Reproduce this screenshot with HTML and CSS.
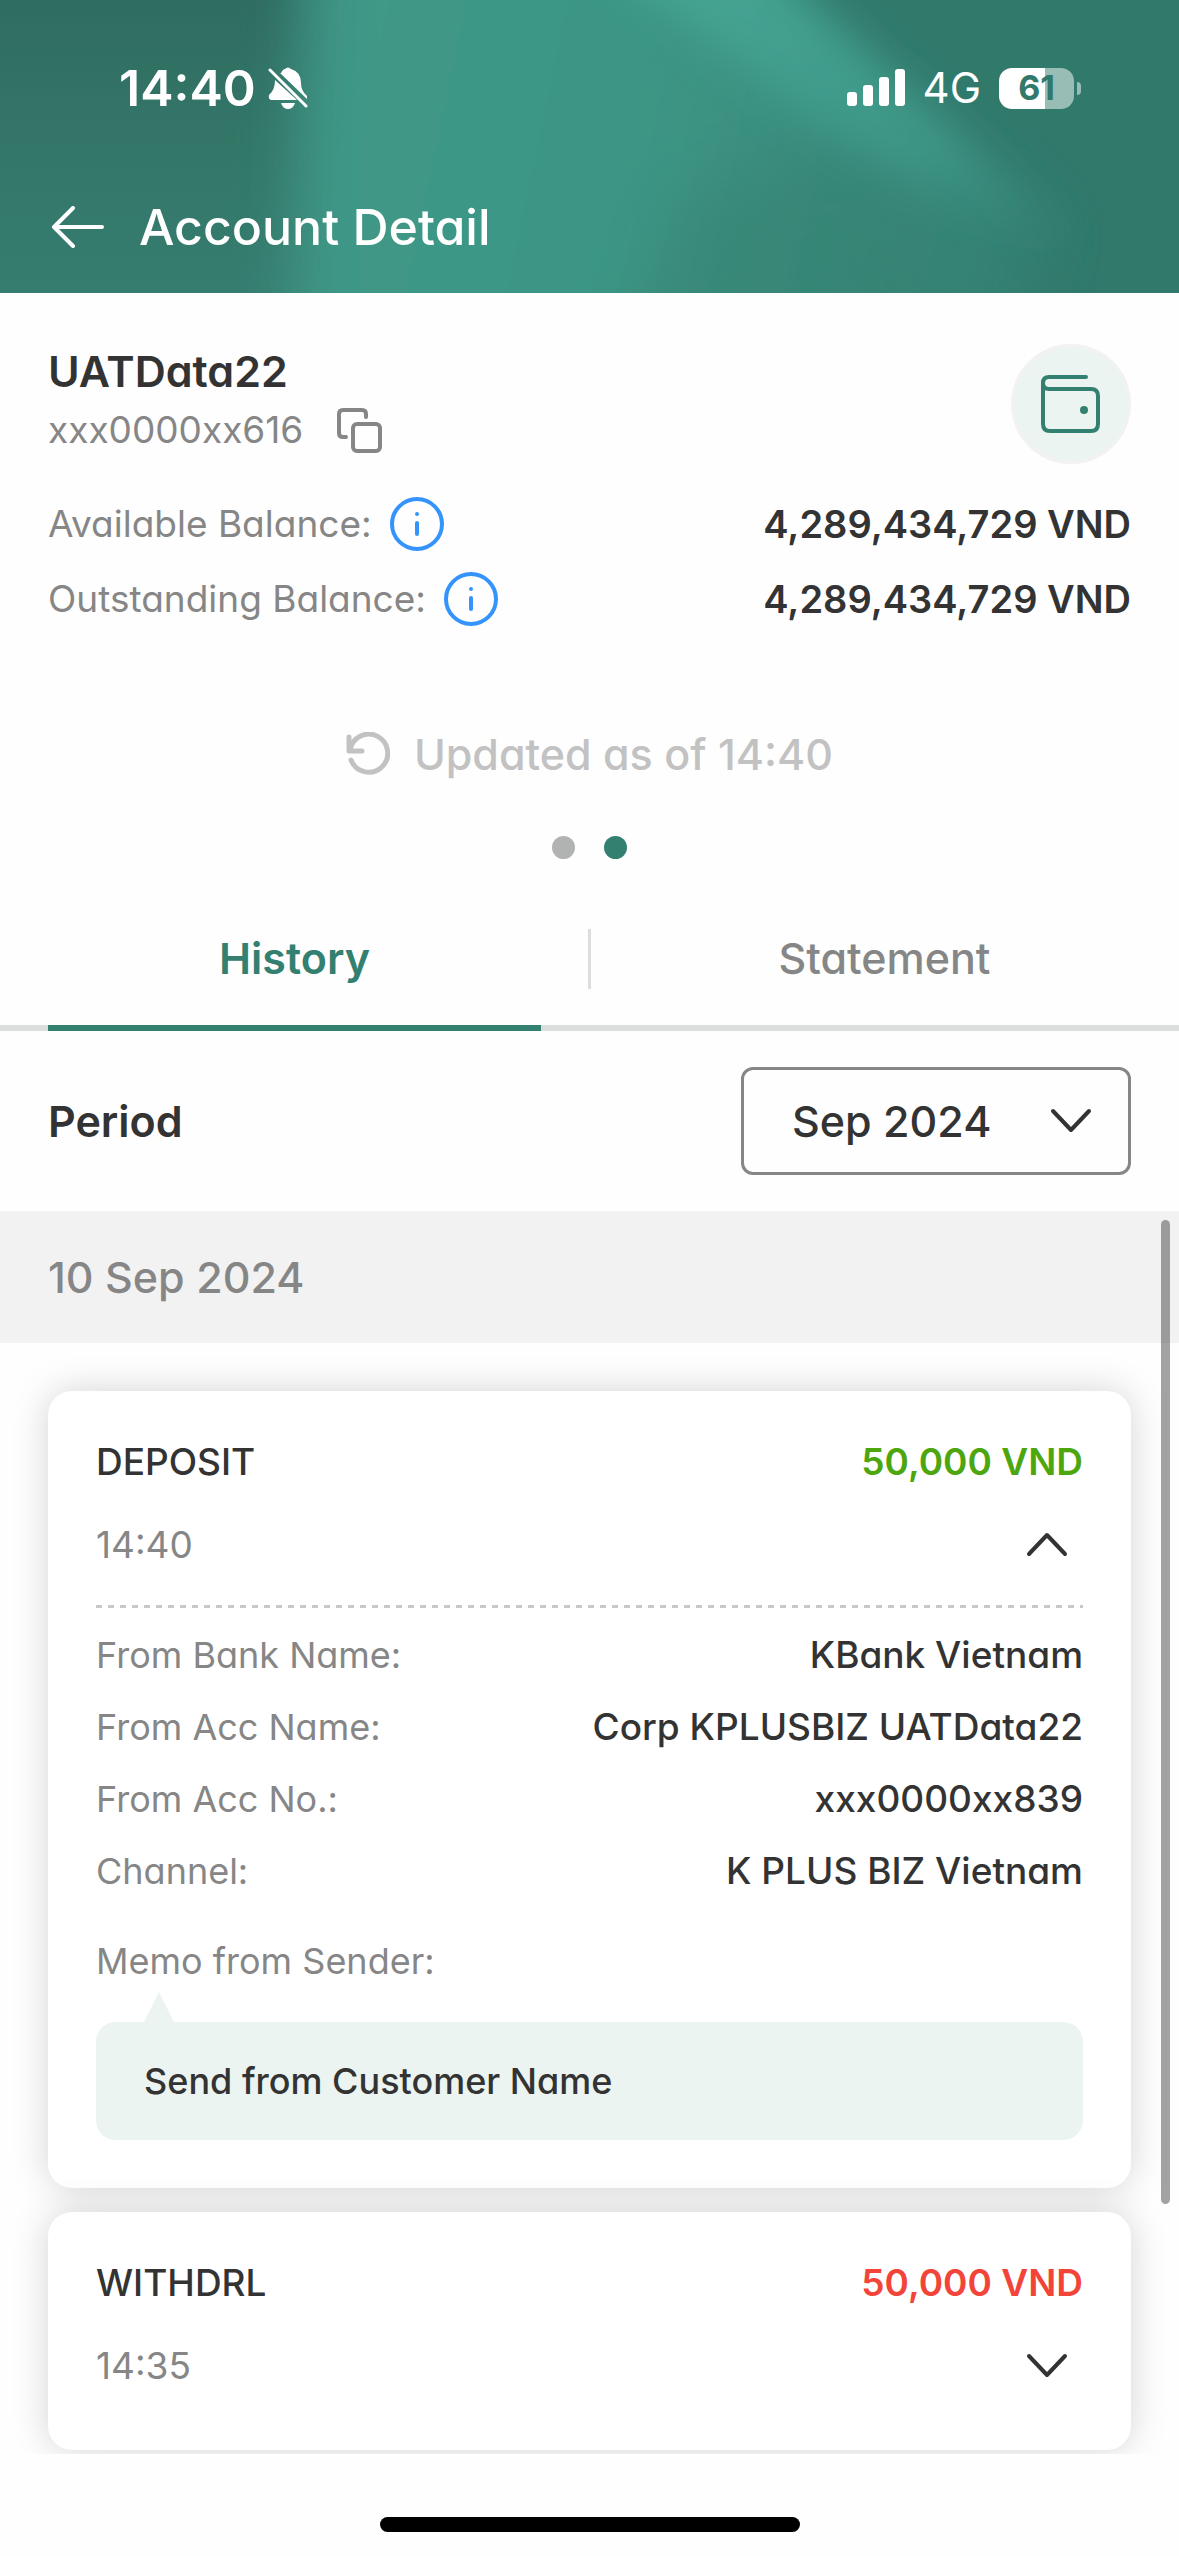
FILE: index.html
```html
<!DOCTYPE html>
<html lang="en">
<head>
<meta charset="utf-8">
<meta name="viewport" content="width=device-width, initial-scale=1">
<title>Account Detail</title>
<link rel="stylesheet" href="styles.css">
</head>
<body>
<div class="screen">
  <header class="header">
    <svg class="header-art" viewBox="0 0 1179 293" preserveAspectRatio="none" aria-hidden="true">
      <defs>
        <linearGradient id="left" x1="0" y1="0" x2="0" y2="1"><stop offset="0" stop-color="#2c675c"/><stop offset=".45" stop-color="#337668"/><stop offset="1" stop-color="#388274"/></linearGradient>
        <linearGradient id="mid" gradientUnits="userSpaceOnUse" x1="300" y1="0" x2="1060" y2="160"><stop offset="0" stop-color="#3f9887"/><stop offset=".45" stop-color="#3e9685"/><stop offset="1" stop-color="#348072"/></linearGradient>
        <linearGradient id="beam" gradientUnits="userSpaceOnUse" x1="700" y1="0" x2="1040" y2="240"><stop offset="0" stop-color="#45a493"/><stop offset=".65" stop-color="#3e9686"/><stop offset="1" stop-color="#3a9080" stop-opacity=".3"/></linearGradient>
        <filter id="soft" x="-50%" y="-50%" width="200%" height="200%"><feGaussianBlur stdDeviation="28"/></filter>
        <filter id="edge" x="-50%" y="-50%" width="200%" height="200%"><feGaussianBlur stdDeviation="20"/></filter>
      </defs>
      <rect width="1179" height="293" fill="#31796b"/>
      <path d="M-100-80H480V400H-100Z" fill="url(#left)"/>
      <path d="M306-80H700L1050 230L980 400H290Z" fill="url(#mid)" filter="url(#soft)"/>
      <path d="M560-80H715L1085 250L860 160Z" fill="url(#beam)" filter="url(#edge)"/>
      <path d="M690 190L860 150L1020 350H620Z" fill="#35806f" opacity=".45" filter="url(#soft)"/>
    </svg>
    <div class="status">
      <div class="status-group">
        <span class="clock">14:40</span>
        <svg width="40" height="44" viewBox="0 0 40 44" fill="#fff" aria-label="Silent">
          <path d="M13 7Q15 3 17 3Q20 0 23 3Q33 6 33 17Q33 25 39 30V33L12 7Z"/>
          <path d="M7 14L29 34H3Q0 33 1 29Q7 24 7 14Z"/>
          <path d="M13 37H27Q25 43 20 43Q15 43 13 37Z"/>
          <path d="M2 4L38 40" stroke="#fff" stroke-width="3" stroke-linecap="round"/>
        </svg>
      </div>
      <div class="status-group status-right">
        <svg width="58" height="38" viewBox="0 0 58 38" fill="#fff" aria-label="Signal">
          <rect y="23" width="10" height="14" rx="3"/><rect x="16" y="16" width="10" height="21" rx="3"/><rect x="32" y="8" width="10" height="29" rx="3"/><rect x="48" width="10" height="37" rx="3"/>
        </svg>
        <span class="network">4G</span>
        <div class="battery"><span class="battery-level">61</span><span class="battery-tip"></span></div>
      </div>
    </div>
    <div class="titlebar">
      <button class="icon-button" type="button" aria-label="Back">
        <svg width="54" height="42" viewBox="0 0 54 42" fill="none" stroke="#fff" stroke-width="4" stroke-linecap="round" stroke-linejoin="round"><path d="M22 2L3 21L22 40M3 21H51"/></svg>
      </button>
      <h1 class="title">Account Detail</h1>
    </div>
  </header>

  <main class="main">
    <section class="account">
      <div class="account-top">
        <div>
          <h2 class="account-name">UATData22</h2>
          <div class="account-number">
            <span>xxx0000xx616</span>
            <button class="icon-button" type="button" aria-label="Copy account number">
              <svg width="46" height="46" viewBox="0 0 46 46" fill="none" stroke="#868686" stroke-width="4" stroke-linecap="round" stroke-linejoin="round"><rect x="16" y="17" width="27" height="27" rx="4"/><path d="M29 10V7Q29 3 25 3H6Q2 3 2 7V26Q2 30 6 30H9"/></svg>
            </button>
          </div>
        </div>
        <div class="wallet">
          <svg width="60" height="60" viewBox="0 0 60 60" fill="none" stroke="#338071" stroke-width="4" stroke-linecap="round" stroke-linejoin="round"><path d="M45 3H8Q2 3 2 9Q2 15 8 15H50Q57 15 57 22V50Q57 57 50 57H9Q2 57 2 50V9"/><circle cx="43" cy="36" r="4" fill="#338071" stroke="none"/></svg>
        </div>
      </div>
      <dl class="balances">
        <div class="row balance">
          <dt>Available Balance: <button class="icon-button" type="button" aria-label="About available balance"><svg width="54" height="54" viewBox="0 0 54 54" fill="none" stroke="#3494fc" stroke-width="4" stroke-linecap="round"><circle cx="27" cy="27" r="25"/><path d="M27 26V37M27 17V17"/></svg></button></dt>
          <dd>4,289,434,729 VND</dd>
        </div>
        <div class="row balance">
          <dt>Outstanding Balance: <button class="icon-button" type="button" aria-label="About outstanding balance"><svg width="54" height="54" viewBox="0 0 54 54" fill="none" stroke="#3494fc" stroke-width="4" stroke-linecap="round"><circle cx="27" cy="27" r="25"/><path d="M27 26V37M27 17V17"/></svg></button></dt>
          <dd>4,289,434,729 VND</dd>
        </div>
      </dl>
      <button class="refresh" type="button">
        <svg width="44" height="44" viewBox="0 0 44 44" fill="none" stroke="#c2c2c2" stroke-width="5" stroke-linecap="round" stroke-linejoin="round"><path d="M3 5V19H16M4 18A19 19 0 1 1 5 28"/></svg>
        Updated as of 14:40
      </button>
      <div class="dots"><span class="dot"></span><span class="dot dot-on"></span></div>
    </section>

    <nav class="tabs">
      <a class="tab tab-on" href="#history">History</a>
      <a class="tab" href="#statement">Statement</a>
    </nav>

    <div class="period">
      <label class="period-label" for="period">Period</label>
      <div class="picker">
        <select class="picker-select" id="period"><option>Sep 2024</option></select>
        <svg class="picker-arrow" width="42" height="26" viewBox="0 0 42 26" fill="none" stroke="#333" stroke-width="4" stroke-linecap="round" stroke-linejoin="round"><path d="M3 3L21 22L39 3"/></svg>
      </div>
    </div>

    <section class="list" id="history">
      <h3 class="date">10 Sep 2024</h3>
      <article class="card">
        <div class="row card-row"><h4 class="kind">DEPOSIT</h4><span class="amount amount-in">50,000 VND</span></div>
        <div class="row card-row card-time"><time>14:40</time>
          <button class="icon-button toggle" type="button" aria-label="Collapse"><svg width="42" height="26" viewBox="0 0 42 26" fill="none" stroke="#333" stroke-width="4" stroke-linecap="round" stroke-linejoin="round"><path d="M3 22L21 3L39 22"/></svg></button>
        </div>
        <dl class="details">
          <div class="row detail"><dt>From Bank Name:</dt><dd>KBank Vietnam</dd></div>
          <div class="row detail"><dt>From Acc Name:</dt><dd>Corp KPLUSBIZ UATData22</dd></div>
          <div class="row detail"><dt>From Acc No.:</dt><dd>xxx0000xx839</dd></div>
          <div class="row detail"><dt>Channel:</dt><dd>K PLUS BIZ Vietnam</dd></div>
        </dl>
        <p class="memo-label">Memo from Sender:</p>
        <p class="memo">Send from Customer Name</p>
      </article>
      <article class="card">
        <div class="row card-row"><h4 class="kind">WITHDRL</h4><span class="amount amount-out">50,000 VND</span></div>
        <div class="row card-row card-time"><time>14:35</time>
          <button class="icon-button toggle" type="button" aria-label="Expand"><svg width="42" height="26" viewBox="0 0 42 26" fill="none" stroke="#333" stroke-width="4" stroke-linecap="round" stroke-linejoin="round"><path d="M3 3L21 22L39 3"/></svg></button>
        </div>
      </article>
      <span class="scrollbar"></span>
    </section>
  </main>
  <footer class="home"><span class="home-bar"></span></footer>
</div>
</body>
</html>
```
FILE: styles.css
```css
* { box-sizing: border-box; margin: 0; padding: 0; }

body {
  background: #fefefe;
  color: #333;
  font: 400 37px/48px Inter, "Liberation Sans", sans-serif;
  font-feature-settings: "cv11";
}

button, select { font: inherit; color: inherit; background: none; border: 0; font-feature-settings: inherit; }
svg { display: block; flex: none; }
dt { color: #868686; }
dd { font-weight: 500; }
h1, h2, h3, h4 { font-size: inherit; }

.screen { min-height: 100vh; display: flex; flex-direction: column; }
.icon-button { display: block; flex: none; }
.row { display: flex; justify-content: space-between; align-items: center; }

/* Header */
.header { position: relative; height: 293px; padding: 56px 105px 0 51px; color: #fff; background: #31796b; overflow: hidden; }
.header-art { position: absolute; inset: 0; width: 100%; height: 100%; }
.status { position: relative; display: flex; justify-content: space-between; height: 64px; align-items: center; padding-left: 68px; }
.status-group { display: flex; align-items: center; gap: 12px; }
.status-right { gap: 18px; }
.clock { font-size: 50px; font-weight: 600; }
.network { font-size: 42px; }
.battery { position: relative; width: 75px; height: 41px; border-radius: 13px; background: linear-gradient(90deg, #fff 61%, #98bdb5 61%); display: flex; align-items: center; justify-content: center; }
.battery-level { color: #31796b; font-size: 34px; font-weight: 700; }
.battery-tip { position: absolute; right: -7px; top: 14px; width: 4px; height: 13px; background: #98bdb5; border-radius: 0 4px 4px 0; }
.titlebar { position: relative; display: flex; align-items: center; gap: 34px; margin-top: 75px; height: 64px; }
.title { font-size: 50px; font-weight: 500; }

/* Account summary */
.account { padding: 48px 48px 0; }
.account-top { display: flex; justify-content: space-between; padding-top: 3px; }
.account-name { font-size: 43px; font-weight: 600; line-height: 54px; }
.account-number { display: flex; align-items: center; gap: 34px; height: 60px; margin-top: 2px; color: #868686; }
.wallet { width: 120px; height: 120px; border: 3px solid #f2f2f2; border-radius: 50%; background: #ebf4f1; display: flex; align-items: center; justify-content: center; }
.balances { padding-top: 22px; }
.balance { height: 75px; }
.balance dt { display: flex; align-items: center; gap: 18px; }
.balance dd { font-size: 38px; font-weight: 600; }
.refresh { display: flex; align-items: center; gap: 24px; margin: 90px auto 0; color: #c2c2c2; font-size: 43px; font-weight: 500; line-height: 56px; }
.dots { display: flex; justify-content: center; gap: 29px; padding-top: 54px; }
.dot { width: 23px; height: 23px; border-radius: 50%; background: #b1b3b2; }
.dot-on { background: #338071; }

/* Tabs */
.tabs { position: relative; display: flex; margin-top: 37px; padding: 0 48px; gap: 97px; box-shadow: inset 0 -6px #dcdedd; }
.tabs::before { content: ""; position: absolute; left: 50%; top: 33px; width: 3px; height: 60px; margin-left: -2px; background: #dcdedd; }
.tab { flex: 1; height: 135px; padding-top: 34px; text-align: center; text-decoration: none; color: #868686; font-size: 43px; font-weight: 500; line-height: 56px; border-bottom: 6px solid transparent; }
.tab-on { color: #338071; font-weight: 600; border-color: #338071; }

/* Period */
.period { display: flex; justify-content: space-between; align-items: center; padding: 36px 48px; }
.period-label { font-size: 43px; font-weight: 600; }
.picker { position: relative; width: 390px; }
.picker-select { appearance: none; display: block; width: 100%; height: 108px; padding: 0 48px; border: 3px solid #868686; border-radius: 12px; font-size: 43px; font-weight: 500; }
.picker-arrow { position: absolute; right: 39px; top: 41px; pointer-events: none; }

/* Transactions */
.list { position: relative; overflow: hidden; padding-bottom: 4px; }
.date { height: 132px; margin-bottom: 48px; padding: 0 48px; background: #f2f2f2; color: #868686; font-size: 43px; font-weight: 500; line-height: 132px; }
.card { margin: 24px 48px 0; padding: 41px 48px 48px; border-radius: 24px; background: #fff; box-shadow: 0 0 36px rgba(0, 0, 0, .17); }
.card-row { height: 60px; }
.card-time { margin: 23px 0 6px; color: #868686; }
.toggle { padding: 0 15px; }
.kind { font-weight: 500; }
.amount { font-weight: 600; }
.amount-in { color: #4da60e; }
.amount-out { color: #f24438; }
.details { margin-top: 30px; padding-top: 14px; background: repeating-linear-gradient(90deg, #c8c8c8 0 6px, transparent 6px 12px) top / 100% 3px no-repeat; }
.detail { height: 72px; }
.detail dt, .memo-label, .memo { font-size: 36px; }
.memo-label { margin-top: 30px; color: #868686; }
.memo { position: relative; margin-top: 37px; padding: 35px 48px; border-radius: 20px; background: #ebf4f1; font-weight: 500; }
.memo::before { content: ""; position: absolute; left: 48px; top: -30px; width: 30px; height: 30px; background: #ebf4f1; clip-path: polygon(50% 0, 100% 100%, 0 100%); }
.scrollbar { position: absolute; right: 9px; top: 9px; bottom: 250px; width: 9px; border-radius: 5px; background: rgba(0, 0, 0, .36); }

/* Home indicator */
.home { margin-top: auto; padding: 63px 0 24px; }
.home-bar { display: block; width: 420px; max-width: 60%; height: 15px; margin: 0 auto; border-radius: 8px; background: #000; }
```
